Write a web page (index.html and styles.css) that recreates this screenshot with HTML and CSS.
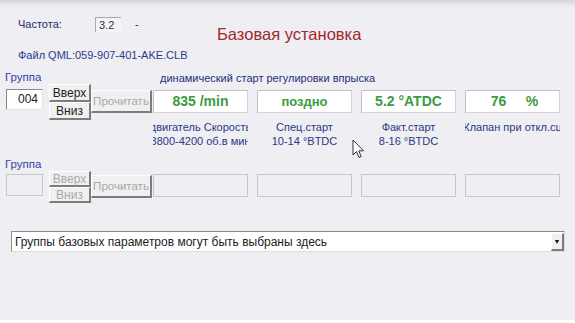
FILE: index.html
```html
<!DOCTYPE html>
<html lang="ru">
<head>
    <meta charset="UTF-8">
    <title>Базовая установка</title>
    <link rel="stylesheet" href="styles.css">
</head>
<body>
    <div class="screen">
        <div class="header">
            <div class="info">
                <div class="freq">
                    <span class="freq-label">Частота:</span>
                    <span class="freq-box">3.2</span>
                    <span class="freq-dash">-</span>
                </div>
                <div class="file">Файл QML:059-907-401-AKE.CLB</div>
            </div>
            <h1 class="title">Базовая установка</h1>
        </div>

        <div class="group">
            <div class="grp-id">
                <div class="grp-label">Группа</div>
                <div class="grp-input">004</div>
            </div>
            <div class="updown">
                <button class="btn">Вверх</button>
                <button class="btn">Вниз</button>
            </div>
            <div class="read">
                <button class="btn btn-read" disabled>Прочитать</button>
            </div>
            <div class="fields">
                <div class="caption">динамический старт регулировки впрыска</div>
                <div class="values">
                    <div class="value">835 /min</div>
                    <div class="value value-small">поздно</div>
                    <div class="value">5.2 °ATDC</div>
                    <div class="value value-pct">76 &nbsp; &nbsp; %</div>
                </div>
                <div class="names">
                    <div class="name"><span>двигатель Скорость</span><span>3800-4200 об.в мин</span></div>
                    <div class="name"><span>Спец.старт</span><span>10-14 °BTDC</span></div>
                    <div class="name"><span>Факт.старт</span><span>8-16 °BTDC</span></div>
                    <div class="name"><span>Клапан при откл.сц</span><span></span></div>
                </div>
            </div>
        </div>

        <div class="group group-off">
            <div class="grp-id">
                <div class="grp-label">Группа</div>
                <div class="grp-input"></div>
            </div>
            <div class="updown">
                <button class="btn" disabled>Вверх</button>
                <button class="btn" disabled>Вниз</button>
            </div>
            <div class="read">
                <button class="btn btn-read" disabled>Прочитать</button>
            </div>
            <div class="fields">
                <div class="caption"></div>
                <div class="values">
                    <div class="value"></div>
                    <div class="value"></div>
                    <div class="value"></div>
                    <div class="value"></div>
                </div>
            </div>
        </div>

        <div class="select">
            <span class="select-text">Группы базовых параметров могут быть выбраны здесь</span>
            <span class="select-arrow">&#9660;</span>
        </div>

        <svg class="cursor" width="13" height="20" viewBox="0 0 13 20">
            <path d="M1 1 L1 16 L4.5 12.5 L7 18.5 L9.2 17.6 L6.8 11.8 L11.5 11.8 Z" fill="#fff" stroke="#333" stroke-width="1" stroke-linejoin="round"/>
        </svg>
    </div>
</body>
</html>
```

FILE: styles.css
```css
body {
    margin: 0;
    background: #fff;
    font-family: "Liberation Sans", Arial, sans-serif;
    font-size: 11px;
    color: #23307a;
}
.screen {
    position: relative;
    width: 575px;
    height: 320px;
    box-sizing: border-box;
    padding-top: 15px;
    background: linear-gradient(#d6d6da, #ececf1 6px, #eeeef3 12px);
}
.header {
    display: flex;
    align-items: flex-start;
}
.info {
    width: 197px;
    padding-left: 18px;
}
.freq {
    display: flex;
    align-items: center;
    height: 18px;
    color: #1c2a6e;
}
.freq-label {
    width: 77px;
}
.freq-box {
    width: 22px;
    height: 14px;
    line-height: 14px;
    padding-left: 3px;
    border-top: 1px solid #a8a8b0;
    border-left: 1px solid #a8a8b0;
    background: #f4f4f8;
    color: #333;
}
.freq-dash {
    margin-left: 14px;
}
.file {
    margin-top: 16px;
    color: #2c3a8c;
}
.title {
    margin: 10px 0 0 2px;
    font-size: 16.5px;
    font-weight: normal;
    color: #a2282a;
}
.group {
    display: flex;
    align-items: flex-start;
    margin-top: 10px;
    padding-left: 5px;
}
.grp-id {
    width: 44px;
}
.grp-label {
    height: 13px;
    line-height: 13px;
    color: #3442a8;
    font-size: 11.5px;
}
.grp-input {
    box-sizing: border-box;
    margin: 5px 0 0 1px;
    width: 37px;
    height: 21px;
    line-height: 19px;
    padding-right: 4px;
    text-align: right;
    font-size: 12px;
    color: #222;
    background: #fff;
    border-top: 1px solid #8a8a8a;
    border-left: 1px solid #8a8a8a;
    border-right: 1px solid #e4e4e4;
    border-bottom: 1px solid #e4e4e4;
}
.updown {
    display: flex;
    flex-direction: column;
    width: 42px;
    margin-top: 13px;
}
.btn {
    box-sizing: border-box;
    margin: 0;
    padding: 0;
    width: 42px;
    height: 18px;
    font-family: inherit;
    font-size: 12px;
    color: #222;
    background: #f0f0f0;
    border-top: 1px solid #fff;
    border-left: 1px solid #fff;
    border-right: 2px solid #7c7c7c;
    border-bottom: 2px solid #7c7c7c;
}
.btn:disabled {
    color: #a8a8a8;
}
.read {
    margin-top: 19px;
}
.btn-read {
    width: 61px;
    height: 23px;
    font-size: 11.5px;
}
.fields {
    margin-left: 1px;
}
.caption {
    height: 14px;
    line-height: 14px;
    padding-left: 7px;
    white-space: nowrap;
    color: #23307a;
}
.values {
    display: grid;
    grid-template-columns: repeat(4, 95px);
    gap: 9px;
    margin-top: 5px;
}
.value {
    box-sizing: border-box;
    height: 23px;
    line-height: 21px;
    text-align: center;
    font-size: 14px;
    font-weight: bold;
    color: #3c9a40;
    background: #fff;
    border: 1px solid #d2d2d6;
    border-top-color: #c0c0c4;
    border-left-color: #c0c0c4;
    white-space: pre;
}
.value-small {
    font-size: 13px;
}
.value-pct {
    padding-left: 4px;
}
.group-off .value,
.group-off .grp-input {
    background: transparent;
    border-color: #c8c8cc;
}
.group-off {
    margin-top: 10px;
}
.group-off .grp-input {
    margin-top: 3px;
    height: 22px;
}
.group-off .updown {
    margin-top: 13px;
}
.group-off .updown .btn {
    height: 16px;
}
.group-off .read {
    margin-top: 17px;
}
.group-off .caption {
    height: 11px;
}
.names {
    display: grid;
    grid-template-columns: repeat(4, 95px);
    gap: 9px;
    margin-top: 7px;
}
.name {
    display: flex;
    flex-direction: column;
    align-items: center;
    overflow: hidden;
    line-height: 14px;
    color: #2a3886;
}
.name span {
    white-space: nowrap;
    min-height: 14px;
}
.select {
    display: flex;
    align-items: center;
    box-sizing: border-box;
    margin: 28px 0 0 11px;
    width: 554px;
    height: 21px;
    background: #fff;
    border-top: 1px solid #8c8c8c;
    border-left: 1px solid #8c8c8c;
    border-right: 1px solid #dcdcdc;
    border-bottom: 1px solid #dcdcdc;
}
.select-text {
    flex: 1;
    padding-left: 3px;
    font-size: 12px;
    color: #222;
}
.select-arrow {
    box-sizing: border-box;
    width: 13px;
    height: 18px;
    line-height: 16px;
    text-align: center;
    font-size: 7px;
    color: #111;
    background: #f0f0f0;
    border-top: 1px solid #fff;
    border-left: 1px solid #fff;
    border-right: 2px solid #7c7c7c;
    border-bottom: 2px solid #7c7c7c;
}
.cursor {
    position: absolute;
    left: 352px;
    top: 139px;
}
```
